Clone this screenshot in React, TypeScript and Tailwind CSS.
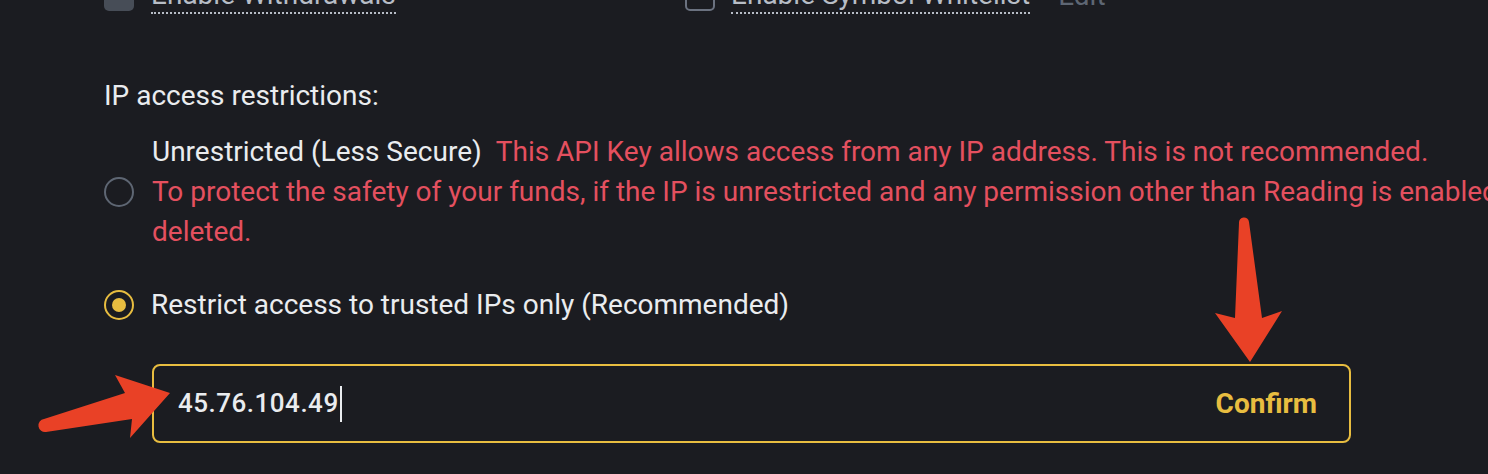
const font = { fontFamily: "Roboto, 'Noto Sans', sans-serif" };

const Radio = ({ checked }: { checked?: boolean }) => (
  <span
    className={
      "flex h-[30px] w-[30px] shrink-0 items-center justify-center rounded-full border-2 " +
      (checked ? "border-[#e8bd40]" : "border-[#5e6673]")
    }
  >
    {checked && <span className="h-[14px] w-[14px] rounded-full bg-[#e8bd40]" />}
  </span>
);

const Arrows = () => (
  <svg
    className="pointer-events-none absolute left-0 top-0"
    width="1488"
    height="474"
    viewBox="0 0 1488 474"
  >
    <path
      d="M44,419 L125,393 L115,375 L170,393 L130,438 L132,419 L46,432 A6.5,6.5 0 0 1 44,419 Z"
      fill="#e94126"
    />
    <path
      d="M1239,223 A5,5 0 0 1 1249,222 L1262,318 L1282,311 L1250,362 L1215,313 L1235,318 Z"
      fill="#e94126"
    />
  </svg>
);

export default function App() {
  return (
    <div
      className="relative h-[474px] w-full overflow-hidden bg-[#1b1c21] text-[28px] text-[#eaecef]"
      style={font}
    >
      <div className="pl-[104px]">
        {/* permissions row, cut off at the top */}
        <div className="-mt-[22px] flex items-center">
          <div className="flex w-[581px] items-center gap-[17px]">
            <span className="h-[30px] w-[30px] rounded-[5px] bg-[#474d57]" />
            <span className="border-b-2 border-dotted border-[#b7bdc6] leading-[34px] text-[#b7bdc6]">
              Enable Withdrawals
            </span>
          </div>
          <div className="flex items-center gap-[16px]">
            <span className="h-[30px] w-[30px] rounded-[5px] border-2 border-[#6b7280]" />
            <span className="border-b-2 border-dotted border-[#b7bdc6] leading-[34px] text-[#b7bdc6]">
              Enable Symbol Whitelist
            </span>
            <span className="ml-[12px] leading-[34px] text-[#5e6673]">Edit</span>
          </div>
        </div>

        <div className="mt-[62px] leading-[40px]">IP access restrictions:</div>

        <div className="mt-[16px] flex items-center gap-[18px]">
          <Radio />
          <div className="w-[1650px] shrink-0 leading-[40px]">
            <div>
              <span>Unrestricted (Less Secure)</span>
              <span className="ml-[14px] text-[#e4505f]">
                This API Key allows access from any IP address. This is not recommended.
              </span>
            </div>
            <div className="text-[#e4505f]">
              To protect the safety of your funds, if the IP is unrestricted and any permission
              other than Reading is enabled, this API key will be deleted.
            </div>
          </div>
        </div>

        <div className="mt-[33px] flex items-center gap-[17px] leading-[40px]">
          <Radio checked />
          <span>Restrict access to trusted IPs only (Recommended)</span>
        </div>

        <div className="ml-[48px] mt-[39px] flex h-[79px] w-[1199px] items-center justify-between rounded-[8px] border-2 border-[#e8bd40] pl-[24px] pr-[32px]">
          <div className="flex items-center">
            <span className="text-[26px] font-medium tracking-[0.5px]">45.76.104.49</span>
            <span className="ml-[1px] h-[36px] w-[2px] bg-[#eaecef]" />
          </div>
          <button className="font-bold text-[#e8bd40]">Confirm</button>
        </div>
      </div>

      <Arrows />
    </div>
  );
}
